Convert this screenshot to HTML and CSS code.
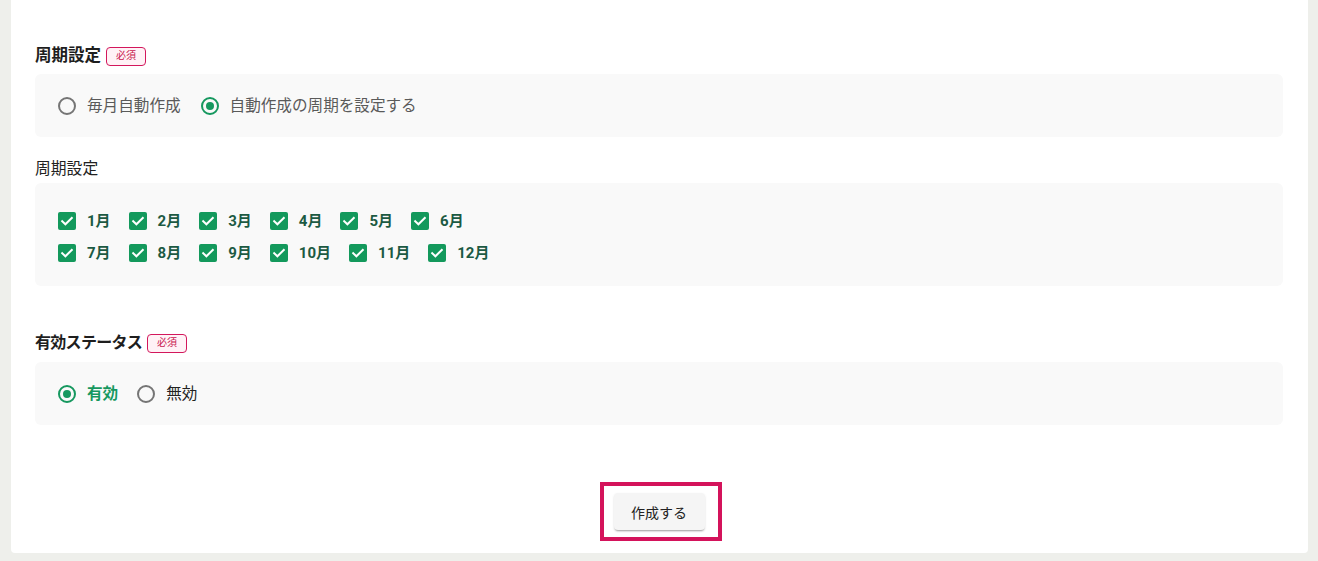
FILE: index.html
```html
<!DOCTYPE html>
<html lang="ja">
<head>
<meta charset="utf-8">
<link rel="stylesheet" href="styles.css">
</head>
<body>
<div class="page">
  <div class="card">
    <section class="field first">
      <div class="field-head">
        <span class="field-title">周期設定</span>
        <span class="badge">必須</span>
      </div>
      <div class="panel panel-radio">
        <label class="radio muted"><span class="dot"></span>毎月自動作成</label>
        <label class="radio muted on"><span class="dot"></span>自動作成の周期を設定する</label>
      </div>
    </section>

    <section class="field sub">
      <div class="sub-title">周期設定</div>
      <div class="panel panel-months">
        <div class="month-row">
          <label class="check"><span class="box"><svg viewBox="0 0 18 18"><path d="M4.2 9.2l3.2 3.1 6.4-6.4" /></svg></span>1月</label>
          <label class="check"><span class="box"><svg viewBox="0 0 18 18"><path d="M4.2 9.2l3.2 3.1 6.4-6.4" /></svg></span>2月</label>
          <label class="check"><span class="box"><svg viewBox="0 0 18 18"><path d="M4.2 9.2l3.2 3.1 6.4-6.4" /></svg></span>3月</label>
          <label class="check"><span class="box"><svg viewBox="0 0 18 18"><path d="M4.2 9.2l3.2 3.1 6.4-6.4" /></svg></span>4月</label>
          <label class="check"><span class="box"><svg viewBox="0 0 18 18"><path d="M4.2 9.2l3.2 3.1 6.4-6.4" /></svg></span>5月</label>
          <label class="check"><span class="box"><svg viewBox="0 0 18 18"><path d="M4.2 9.2l3.2 3.1 6.4-6.4" /></svg></span>6月</label>
        </div>
        <div class="month-row">
          <label class="check"><span class="box"><svg viewBox="0 0 18 18"><path d="M4.2 9.2l3.2 3.1 6.4-6.4" /></svg></span>7月</label>
          <label class="check"><span class="box"><svg viewBox="0 0 18 18"><path d="M4.2 9.2l3.2 3.1 6.4-6.4" /></svg></span>8月</label>
          <label class="check"><span class="box"><svg viewBox="0 0 18 18"><path d="M4.2 9.2l3.2 3.1 6.4-6.4" /></svg></span>9月</label>
          <label class="check"><span class="box"><svg viewBox="0 0 18 18"><path d="M4.2 9.2l3.2 3.1 6.4-6.4" /></svg></span>10月</label>
          <label class="check"><span class="box"><svg viewBox="0 0 18 18"><path d="M4.2 9.2l3.2 3.1 6.4-6.4" /></svg></span>11月</label>
          <label class="check"><span class="box"><svg viewBox="0 0 18 18"><path d="M4.2 9.2l3.2 3.1 6.4-6.4" /></svg></span>12月</label>
        </div>
      </div>
    </section>

    <section class="field status">
      <div class="field-head">
        <span class="field-title tight">有効ステータス</span>
        <span class="badge">必須</span>
      </div>
      <div class="panel panel-radio">
        <label class="radio on strong"><span class="dot"></span>有効</label>
        <label class="radio"><span class="dot"></span>無効</label>
      </div>
    </section>

    <div class="actions">
      <div class="highlight">
        <button class="btn">作成する</button>
      </div>
    </div>
  </div>
</div>
</body>
</html>
```

FILE: styles.css
```css
* { box-sizing: border-box; }
html, body {
  margin: 0;
  padding: 0;
  background: #eeefeb;
  font-family: Roboto, "Noto Sans CJK JP", "Noto Sans", sans-serif;
  color: #222;
}
.page {
  padding: 0 10px 8px 11px;
}
.card {
  background: #fff;
  border-radius: 0 0 4px 4px;
  padding: 46px 25px 12px 24px;
  height: 553px;
}
.field-head {
  display: flex;
  align-items: center;
  height: 20px;
  gap: 5px;
}
.field-title {
  font-size: 16.5px;
  font-weight: 700;
  line-height: 20px;
  color: #1e1e1e;
}
.field-title.tight {
  font-size: 16px;
  letter-spacing: -0.7px;
}
.badge {
  display: inline-flex;
  align-items: center;
  justify-content: center;
  width: 40px;
  height: 19px;
  border: 1px solid #d3175c;
  border-radius: 4px;
  background: #fff2f6;
  color: #c8174f;
  font-size: 10px;
  line-height: 1;
}
.panel {
  background: #f9f9f9;
  border-radius: 6px;
}
.panel-radio {
  margin-top: 8px;
  height: 63px;
  display: flex;
  align-items: center;
  padding: 0 23px;
  gap: 20px;
}
.radio {
  display: inline-flex;
  align-items: center;
  gap: 11px;
  font-size: 15.6px;
  line-height: 22px;
  color: #222;
}
.radio.muted { color: #5a5a5a; }
.radio .dot {
  width: 18px;
  height: 18px;
  border-radius: 50%;
  border: 2px solid #757575;
  display: inline-flex;
  align-items: center;
  justify-content: center;
  flex: none;
}
.radio.on .dot {
  border-color: #16985f;
}
.radio.on .dot::after {
  content: "";
  width: 8px;
  height: 8px;
  border-radius: 50%;
  background: #16985f;
}
.radio.strong {
  color: #16985f;
  font-weight: 700;
}
.status .panel-radio {
  gap: 19px;
  margin-top: 9px;
}
.sub {
  margin-top: 22px;
}
.sub-title {
  font-size: 15.8px;
  line-height: 20px;
  color: #222;
}
.panel-months {
  margin-top: 4px;
  padding: 26px 23px 21px;
  display: flex;
  flex-direction: column;
  gap: 8px;
}
.month-row {
  display: flex;
  align-items: center;
  height: 24px;
}
.check {
  display: inline-flex;
  align-items: center;
  gap: 11px;
  margin-right: 18px;
  font-size: 15px;
  font-weight: 700;
  color: #1c5a43;
  line-height: 24px;
}
.check .box {
  width: 18px;
  height: 18px;
  border-radius: 2px;
  background: #13995c;
  display: inline-flex;
  flex: none;
}
.check .box svg {
  width: 18px;
  height: 18px;
}
.check .box path {
  fill: none;
  stroke: #fff;
  stroke-width: 2;
  stroke-linecap: square;
}
.status {
  margin-top: 47px;
}
.actions {
  margin-top: 57px;
  display: flex;
  justify-content: center;
}
.highlight {
  border: 4px solid #d4135b;
  padding: 7px 13px 7px 10px;
  margin-left: 3px;
}
.btn {
  display: block;
  width: 91px;
  height: 37px;
  border: none;
  border-radius: 4px;
  background: #f5f5f5;
  box-shadow: 0 2px 2px -1px rgba(0,0,0,0.35), 0 1px 3px rgba(0,0,0,0.08);
  font-family: Roboto, "Noto Sans CJK JP", sans-serif;
  font-size: 14px;
  color: #222;
  padding: 0;
}
```
